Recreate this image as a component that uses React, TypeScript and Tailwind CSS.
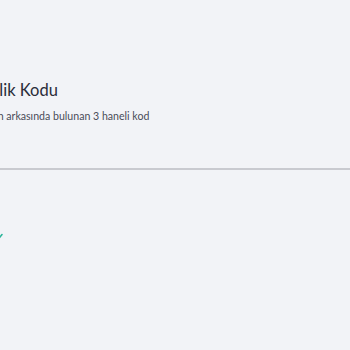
export default function App() {
  return (
    <div className="w-[350px] h-[350px] overflow-hidden bg-[#f2f3f7] font-['Lato','Open_Sans',sans-serif]">
      <div className="pt-[80px]">
        <h2 className="ml-[-48px] text-[16.5px] leading-[20px] text-[#2b2d3a]">Güvenlik Kodu</h2>
        <p className="ml-[-25px] mt-[9px] text-[10.6px] leading-[14px] text-[#4a4c58]">Kartın arkasında bulunan 3 haneli kod</p>
      </div>
      <div className="mt-[45px] h-[2px] bg-[#c9cad0]" />
      <div className="ml-[-8px] mt-[61px] flex items-center">
        <svg width="12" height="12" viewBox="0 0 12 12" fill="none" stroke="#2bb59a" strokeWidth="1.6" strokeLinecap="round">
          <path d="M2 6.5l3 3 5-6" />
        </svg>
      </div>
    </div>
  );
}
